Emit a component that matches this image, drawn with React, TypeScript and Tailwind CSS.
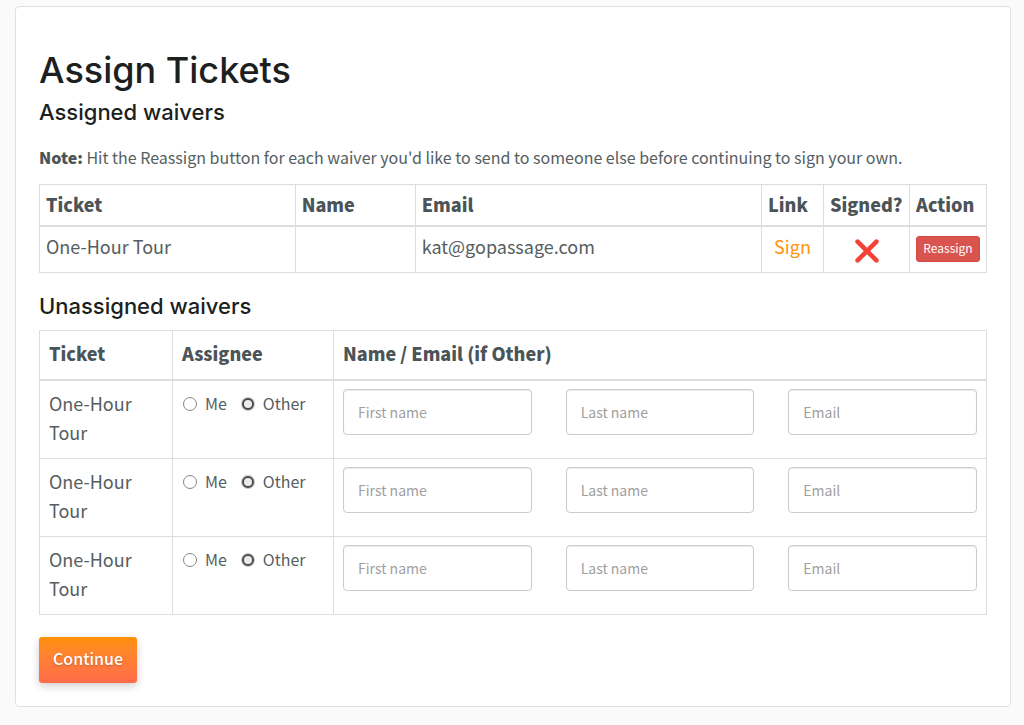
import { useState } from 'react';

const ASSIGNED = [
  { ticket: 'One-Hour Tour', name: '', email: 'kat@gopassage.com' },
];

const UNASSIGNED = [
  { id: 1, ticket: 'One-Hour Tour' },
  { id: 2, ticket: 'One-Hour Tour' },
  { id: 3, ticket: 'One-Hour Tour' },
];

const FIELDS = [
  { key: 'first', label: 'First name', type: 'text' },
  { key: 'last',  label: 'Last name',  type: 'text' },
  { key: 'email', label: 'Email',      type: 'email' },
];

const TH = 'border border-b-2 border-[#dddddd] px-[6px] pt-[5px] pb-[6px] font-black';
const TD = 'border border-[#dddddd] px-[6px] pt-[5px] pb-[6px]';
const TH_WIDE = 'border border-b-2 border-[#dddddd] px-[9px] pt-[8px] pb-[11px] font-black';
const TD_WIDE = 'border border-[#dddddd] px-[9px] pt-[8px] pb-[11px]';

const RADIO =
  'appearance-none size-[14px] shrink-0 rounded-full border border-[#858585] bg-white ' +
  'checked:size-3 checked:mx-px checked:border-2 checked:border-[#4c4c4c] checked:bg-[#ececec] checked:ring-1 checked:ring-[#c8c8c8]';

function Cross() {
  return (
    <svg viewBox="0 0 24 24" className="size-6" role="img" aria-label="Not signed">
      <path d="M2.6 2.6 L21.4 21.4 M21.4 2.6 L2.6 21.4" stroke="#f44336" strokeWidth="4.6" strokeLinecap="round" />
    </svg>
  );
}

function WaiverRow({ id, ticket }: { id: number; ticket: string }) {
  const [assignee, setAssignee] = useState('Other');

  return (
    <tr className="align-top">
      <td className={`${TD_WIDE} text-lg leading-[29px]`}>{ticket}</td>
      <td className="border border-[#dddddd] px-[10px] pt-[8px] pb-[11px]">
        <div className="flex items-center gap-[14px] text-base leading-[29px]">
          {['Me', 'Other'].map(option => (
            <label key={option} className="flex items-center gap-2">
              <input
                type="radio"
                name={`assignee-${id}`}
                value={option}
                checked={assignee === option}
                onChange={() => setAssignee(option)}
                className={RADIO}
              />
              {option}
            </label>
          ))}
        </div>
      </td>
      <td className="border border-[#dddddd] px-[9px] pt-[8px] pb-[11px]">
        <div className="grid grid-cols-3 gap-[34px]">
          {FIELDS.map(f => (
            <input
              key={f.key}
              type={f.type}
              name={`${f.key}-${id}`}
              aria-label={f.label}
              placeholder={f.label}
              className="h-[46px] w-full min-w-0 rounded border border-[#cccccc] bg-white px-[14px] text-sm shadow-[inset_0_1px_1px_rgba(0,0,0,0.08)] placeholder:text-[#a0a0a0]"
            />
          ))}
        </div>
      </td>
    </tr>
  );
}

export default function App() {
  return (
    <div className="min-h-screen bg-[#fafafa] pt-[6px] pb-[18px] pl-[15px] pr-[13px] font-['Noto_Sans_CJK_SC',sans-serif] text-[#555e61]">
      <main className="rounded border border-[#e0e0e0] bg-white px-[23px] pt-[40px] pb-[23px]">
        <h1 className="font-['Inter',sans-serif] text-4xl leading-[46px] font-medium text-[#1d1f20]">Assign Tickets</h1>
        <h2 className="mt-[5px] font-['Inter',sans-serif] text-[22px] leading-[28px] font-medium text-[#1d1f20]">Assigned waivers</h2>

        <p className="mt-[19px] text-base leading-6">
          <strong className="font-black text-[#4b5457]">Note:</strong> Hit the Reassign button for each waiver you'd like to send to someone else before continuing to sign your own.
        </p>

        {/* Assigned */}
        <table className="mt-[15px] w-full table-fixed border-collapse border border-[#dddddd] text-lg leading-[29px]">
          <thead>
            <tr className="text-left text-[#4b5457]">
              <th className={`${TH} w-[27%]`}>Ticket</th>
              <th className={`${TH} w-[120px]`}>Name</th>
              <th className={TH}>Email</th>
              <th className={`${TH} w-[62px]`}>Link</th>
              <th className={`${TH} w-[86px]`}>Signed?</th>
              <th className={`${TH} w-[77px]`}>Action</th>
            </tr>
          </thead>
          <tbody>
            {ASSIGNED.map(w => (
              <tr key={w.email} className="align-top">
                <td className={TD}>{w.ticket}</td>
                <td className={TD}>{w.name}</td>
                <td className={TD}>{w.email}</td>
                <td className={`${TD} text-center`}>
                  <a href="#sign" className="text-[#ff9410]">Sign</a>
                </td>
                <td className="border border-[#dddddd] px-[6px] pt-3 pb-[9px]">
                  <div className="flex justify-center"><Cross /></div>
                </td>
                <td className="border border-[#dddddd] px-[6px] py-[9px]">
                  <button type="button" className="block h-[26px] w-full rounded-[3px] border border-[#d64a46] bg-[#d9534f] pb-[2px] text-xs leading-[22px] text-white">
                    Reassign
                  </button>
                </td>
              </tr>
            ))}
          </tbody>
        </table>

        {/* Unassigned */}
        <h2 className="mt-[19px] font-['Inter',sans-serif] text-[22px] leading-[28px] font-medium text-[#1d1f20]">Unassigned waivers</h2>
        <form onSubmit={e => e.preventDefault()}>
          <table className="mt-[10px] w-full table-fixed border-collapse border border-[#dddddd]">
            <thead>
              <tr className="text-left text-lg leading-[29px] text-[#4b5457]">
                <th className={`${TH_WIDE} w-[133px]`}>Ticket</th>
                <th className={`${TH_WIDE} w-[161px]`}>Assignee</th>
                <th className={TH_WIDE}>Name / Email (if Other)</th>
              </tr>
            </thead>
            <tbody>
              {UNASSIGNED.map(w => <WaiverRow key={w.id} id={w.id} ticket={w.ticket} />)}
            </tbody>
          </table>

          <button
            type="submit"
            className="mt-[22px] h-[46px] rounded-[3px] bg-linear-to-b from-[#ff9100] to-[#ff6b4a] px-[14px] pb-[5px] text-base font-medium text-white shadow-[0_3px_8px_rgba(0,0,0,0.2)] text-shadow-[0_1px_2px_rgba(0,0,0,0.25)]"
          >
            Continue
          </button>
        </form>
      </main>
    </div>
  );
}
